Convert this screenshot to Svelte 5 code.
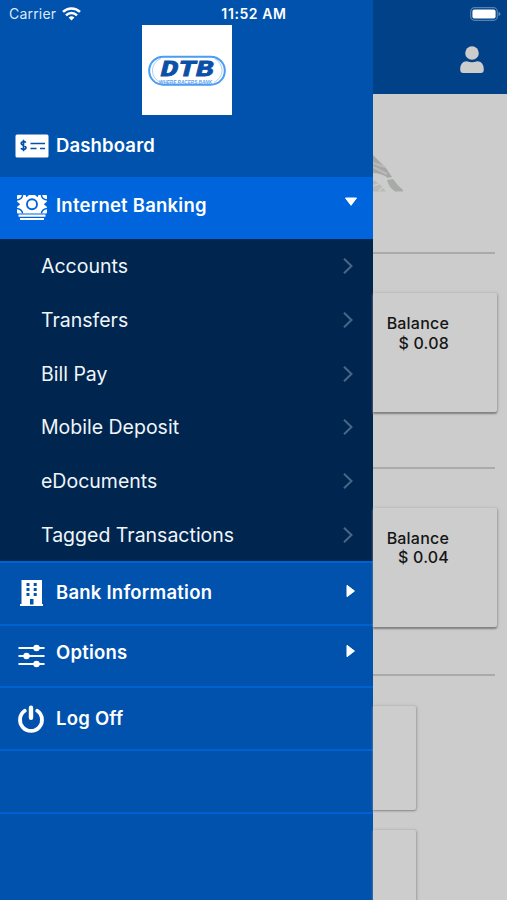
<script>
    const subItems = ['Accounts', 'Transfers', 'Bill Pay', 'Mobile Deposit', 'eDocuments', 'Tagged Transactions'];

    const accounts = [
        { id: 1, balance: '$ 0.08' },
        { id: 2, balance: '$ 0.04' }
    ];

    let bankingOpen = $state(true);
</script>

<div class="screen">
    <div class="status-bar">
        <span class="carrier">
            Carrier
            <svg width="19" height="14" viewBox="0 0 19 14" fill="none" stroke="#fff" stroke-width="2.5">
                <path d="M1 4.900a12.200 12.200 0 0 1 17 0M4 8.300a7.800 7.800 0 0 1 11 0" />
                <path d="M6.600 10.600a4.200 4.200 0 0 1 5.800 0L9.500 13.600z" fill="#fff" stroke="none" />
            </svg>
        </span>
        <span class="clock">11:52 AM</span>
        <svg class="battery" width="31" height="14" viewBox="0 0 31 14">
            <rect x="0.700" y="0.700" width="26.600" height="12.600" rx="3.800" fill="none" stroke="#fff" stroke-opacity=".34" stroke-width="1.200" />
            <rect x="2.400" y="2.400" width="23.200" height="9.200" rx="2" fill="#fff" />
            <path d="M28.500 5v4q2-.5 2-2t-2-2z" fill="#fff" opacity=".4" />
        </svg>
    </div>

    <nav class="menu">
        <div class="logo">
            <svg width="90" height="90" viewBox="0 0 90 90">
                <rect x="7.200" y="31.700" width="75.600" height="28" rx="14" fill="none" stroke="#4b9cf5" stroke-width="2" />
                <rect x="18" y="33" width="55" height="25" fill="#fff" />
                <path d="M19 33.500C13 36 10.500 41 10.500 46s3 9 8 11.500M72 33.500c5 2 8 7 8 12s-3 9-8 12" fill="none" stroke="#a5cffa" stroke-width="1" />
                <text x="18.500" y="51" class="logo-name" textLength="53" lengthAdjust="spacingAndGlyphs">DTB</text>
                <text x="17" y="59" class="logo-tag" textLength="53" lengthAdjust="spacingAndGlyphs">WHERE RACERS BANK</text>
            </svg>
        </div>

        <a class="item dashboard" href="#dashboard">
            <svg class="icon" width="34" height="24" viewBox="0 0 34 24">
                <rect x="0.500" y="0.500" width="33" height="23" rx="1.500" fill="#fff" />
                <path d="M10.800 8.600C10 7.400 6.200 7.200 6.200 9.500c0 2.400 4.800 1.500 4.800 4 0 2.300-4 2.200-5.200.8M8.500 5.800v11.400M15.500 9.500h14.500M15.500 14.500h6M25 14.500h5" fill="none" stroke="#0052ad" stroke-width="1.700" />
            </svg>
            <span>Dashboard</span>
        </a>

        <button class="item active" onclick={() => (bankingOpen = !bankingOpen)}>
            <svg class="icon bills" width="34" height="26" viewBox="0 0 34 26">
                <rect x="2" y="1" width="30" height="18.500" rx="1" fill="#fff" />
                <g fill="none" stroke="#0065dc" stroke-width="1.500">
                    <circle cx="17" cy="10.200" r="5" stroke-width="1.900" />
                    <path d="M7.500 1q0 4-5.500 5M26.500 1q0 4 5.500 5M7.500 19.500q0-4-5.500-5M26.500 19.500q0-4 5.500-5" />
                </g>
                <path d="M2 7.500l3.200 2.700L2 13zM32 7.500l-3.200 2.700L32 13zM10.500 1h3.500l-2.500 2.200zM23.500 1H20l2.500 2.200z" fill="#0065dc" />
                <path d="M3.500 21.600h27M5 25h24" stroke="#fff" stroke-width="2.200" />
            </svg>
            <span>Internet Banking</span>
            <svg class="arrow down" width="14" height="10" viewBox="0 0 14 10"><path d="M1.500 1h11L7 8.300z" fill="#fff" stroke="#fff" stroke-linejoin="round" /></svg>
        </button>

        {#if bankingOpen}
            <div class="submenu">
                {#each subItems as name}
                    <a class="sub-item" href="#{name}">
                        <span>{name}</span>
                        <svg width="12" height="18" viewBox="0 0 12 18"><path d="M2 1.700 9.500 9 2 16.300" fill="none" stroke="#476789" stroke-width="2" /></svg>
                    </a>
                {/each}
            </div>
        {/if}

        <a class="item" href="#bank">
            <svg class="icon" width="34" height="28" viewBox="0 0 34 28">
                <path d="M6.500 1h20.500v24h1v2H5v-2h1.500z" fill="#fff" />
                <path d="M11.500 4h3v3h-3zM18.700 4h3v3h-3zM11.500 9h3v3h-3zM18.700 9h3v3h-3zM11.500 14h3v3h-3zM18.700 14h3v3h-3zM15 20h3.500v5.500H15z" fill="#0052ad" />
            </svg>
            <span>Bank Information</span>
            <svg class="arrow" width="10" height="14" viewBox="0 0 10 14"><path d="M1 1.300v11.400L8.500 7z" fill="#fff" stroke="#fff" stroke-linejoin="round" /></svg>
        </a>
        <a class="item options" href="#options">
            <svg class="icon" width="34" height="24" viewBox="0 0 34 24">
                <path d="M3.500 4h26M3.500 12h26M3.500 20h26" stroke="#fff" stroke-width="2.200" />
                <circle cx="21.500" cy="4" r="3.200" fill="#fff" />
                <circle cx="11.500" cy="12" r="3.200" fill="#fff" />
                <circle cx="21.500" cy="20" r="3.200" fill="#fff" />
            </svg>
            <span>Options</span>
            <svg class="arrow" width="10" height="14" viewBox="0 0 10 14"><path d="M1 1.300v11.400L8.500 7z" fill="#fff" stroke="#fff" stroke-linejoin="round" /></svg>
        </a>
        <a class="item logoff" href="#logoff">
            <svg class="icon" width="34" height="28" viewBox="0 0 34 28">
                <path d="M9.800 5.800a11 11 0 1 0 12.400 0" fill="none" stroke="#fff" stroke-width="3.800" stroke-linecap="round" />
                <path d="M16 2.700v10" stroke="#fff" stroke-width="4.400" stroke-linecap="round" />
            </svg>
            <span>Log Off</span>
        </a>
        <div class="item"></div>
        <div class="item"></div>
    </nav>

    <main class="page">
        <header>
            <svg width="24" height="28" viewBox="0 0 24 28" fill="#ccc">
                <circle cx="12" cy="7" r="6.800" />
                <path d="M.2 23.500C.2 18.500 2.500 15.300 7 15.300q5 2 10 0c4.500 0 6.800 3.200 6.800 8.200 0 2.500-1 3.500-3 3.500H3.200c-2 0-3-1-3-3.500z" />
            </svg>
        </header>
        <div class="banner">
            <svg width="32" height="38" viewBox="0 0 32 38">
                <path d="M0 1L8 9l5 5 6 9-4 1Q8 19 0 19z" fill="#a6a8a6" />
                <path d="M0 9l12 4M0 13l14 7" stroke="#b9bab9" stroke-width="2" />
                <path d="M14 26l6-1q4 6 10 11v1.500h-8q-6-4-8-11.500z" fill="#a8aaa8" />
                <path d="M0 26q6 2 13 11.500H0z" fill="#b9b9b8" />
                <path d="M0 32l8-3M6 37l5-5" stroke="#ccc" stroke-width="1.500" />
            </svg>
        </div>
        {#each accounts as account (account.id)}
            <section class="account">
                <div class="card">
                    <div>Balance</div>
                    <div>{account.balance}</div>
                </div>
            </section>
        {/each}
        <section class="tiles">
            <div class="tile"></div>
            <div class="tile"></div>
        </section>
    </main>
</div>

<style>
    :global(body) {
        margin: 0;
    }
    .screen {
        position: relative;
        display: flex;
        width: 507px;
        height: 900px;
        overflow: hidden;
        background: #ccc;
        font-family: Inter, "Liberation Sans", sans-serif;
    }
    .status-bar {
        position: absolute;
        top: 0;
        left: 0;
        right: 0;
        z-index: 2;
        display: grid;
        grid-template-columns: 1fr auto 1fr;
        align-items: center;
        height: 27px;
        padding: 0 6px 0 9px;
        color: #fff;
        font-size: 14px;
    }
    .carrier {
        display: flex;
        align-items: center;
        gap: 6px;
        color: #dce8f7;
        letter-spacing: 0.2px;
    }
    .clock {
        margin-right: 2px;
        font-weight: 600;
        letter-spacing: 0.6px;
    }
    .battery {
        justify-self: end;
    }
    .menu {
        flex: none;
        width: 372.500px;
        background: #0052ad;
    }
    .logo {
        width: 90px;
        height: 90px;
        margin: 25px auto 0 141.500px;
        background: #fff;
    }
    .logo svg {
        display: block;
    }
    .logo-name {
        font: italic 700 22px "Liberation Mono", monospace;
        fill: #0b50a8;
        stroke: #0b50a8;
        stroke-width: 0.8px;
    }
    .logo-tag {
        font: italic 600 5px "Liberation Sans", sans-serif;
        fill: #5a9fee;
    }
    .item {
        display: flex;
        align-items: center;
        box-sizing: border-box;
        width: 100%;
        height: 62.700px;
        padding: 0 15px;
        border: 0;
        border-top: 2px solid #0061d2;
        background: none;
        color: #fff;
        font: 600 18.500px Inter, sans-serif;
        letter-spacing: 0.230px;
        text-decoration: none;
    }
    .item span {
        margin: 0 0 2px 7px;
        flex: 1;
        text-align: left;
    }
    .item.dashboard {
        height: 61.500px;
        border-top: 0;
        letter-spacing: 0.150px;
    }
    .item.active {
        height: 62.500px;
        padding-bottom: 5px;
        background: #0065dc;
        border-top: 0;
    }
    .item.active span {
        margin-bottom: 0;
    }
    .bills {
        position: relative;
        top: 2px;
    }
    .arrow {
        flex: none;
        margin: 0 2px 4px 0;
    }
    .arrow.down {
        margin: 0 0 6px 0;
    }
    .options {
        padding-bottom: 6px;
    }
    .options .icon {
        position: relative;
        top: 3px;
    }
    .submenu {
        height: 322px;
        display: grid;
        grid-template-rows: repeat(6, 1fr);
        background: #00264f;
    }
    .sub-item {
        display: flex;
        align-items: center;
        justify-content: space-between;
        padding: 1px 19px 0 41px;
        color: #f0f5fa;
        font-size: 19.500px;
        text-decoration: none;
    }
    .page {
        flex: 1;
        min-width: 0;
    }
    header {
        display: flex;
        justify-content: flex-end;
        box-sizing: border-box;
        height: 93.500px;
        padding: 46px 23px 0 0;
        background: #004187;
    }
    .banner {
        box-sizing: border-box;
        height: 158.500px;
        padding-top: 60px;
    }
    .banner svg {
        display: block;
    }
    .account {
        height: 214.500px;
        padding-right: 10px;
    }
    .account + .account {
        height: 207px;
    }
    .account::before,
    .tiles::before {
        content: "";
        display: block;
        height: 2px;
        width: 122px;
        background: #aaa;
    }
    .card {
        box-sizing: border-box;
        height: 119px;
        margin-top: 39px;
        padding: 21px 48px 0 0;
        border-radius: 0 2px 2px 0;
        box-shadow: 0 2px 2px #808080, 1px 0 3px #aaa;
        background: #cdcdcd;
        color: #151515;
        font-size: 16px;
        font-weight: 500;
        letter-spacing: 0.200px;
        line-height: 19.500px;
        text-align: right;
    }
    .tile {
        width: 43.500px;
        height: 104px;
        margin-top: 20px;
        border-radius: 0 2px 2px 0;
        box-shadow: 0 1px 2px #888, 1px 0 3px #aaa;
        background: #cdcdcd;
    }
    .tiles .tile:first-child {
        margin-top: 30px;
    }
</style>
